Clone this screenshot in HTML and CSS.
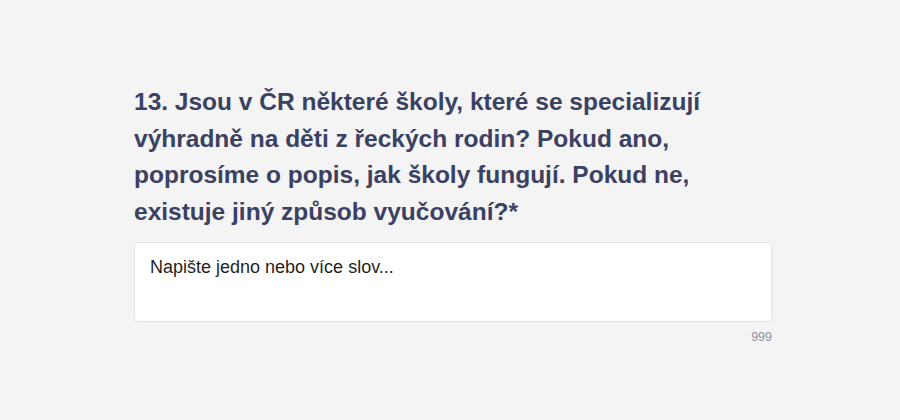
FILE: index.html
```html
<!DOCTYPE html>
<html lang="cs">
    <head>
        <meta charset="UTF-8" />
        <meta name="viewport" content="width=device-width, initial-scale=1.0" />
        <title>Dotazník</title>
        <link rel="stylesheet" href="styles.css">
    </head>
    <body>
        <div class="question">
            <h2 class="question-title">13. Jsou v ČR některé školy, které se specializují výhradně na děti z řeckých rodin? Pokud ano, poprosíme o popis, jak školy fungují. Pokud ne, existuje jiný způsob vyučování?*</h2>
            <div class="answer">
                <textarea class="answer-input" placeholder="Napište jedno nebo více slov..."></textarea>
            </div>
            <div class="counter">999</div>
        </div>
    </body>
</html>
```

FILE: styles.css
```css
* {
    margin: 0;
    padding: 0;
    box-sizing: border-box;
}

html,
body {
    height: 100%;
}

body {
    background-color: #f4f4f4;
    font-family: "Liberation Sans", Arial, sans-serif;
}

.question {
    width: 638px;
    margin-left: 134px;
    padding-top: 84px;
}

.question-title {
    font-size: 24.5px;
    line-height: 36.5px;
    font-weight: bold;
    color: #3a4163;
}

.answer {
    margin-top: 12px;
}

.answer-input {
    display: block;
    width: 100%;
    height: 80px;
    padding: 14px 15px;
    border: 1px solid #e3e3e3;
    border-radius: 4px;
    background-color: #fff;
    font-family: "Liberation Sans", Arial, sans-serif;
    font-size: 18px;
    color: #222;
    resize: none;
    outline: none;
}

.answer-input::placeholder {
    color: #1f1f1f;
    opacity: 1;
}

.counter {
    margin-top: 8px;
    text-align: right;
    font-size: 12.5px;
    color: #8d91a3;
}
```
